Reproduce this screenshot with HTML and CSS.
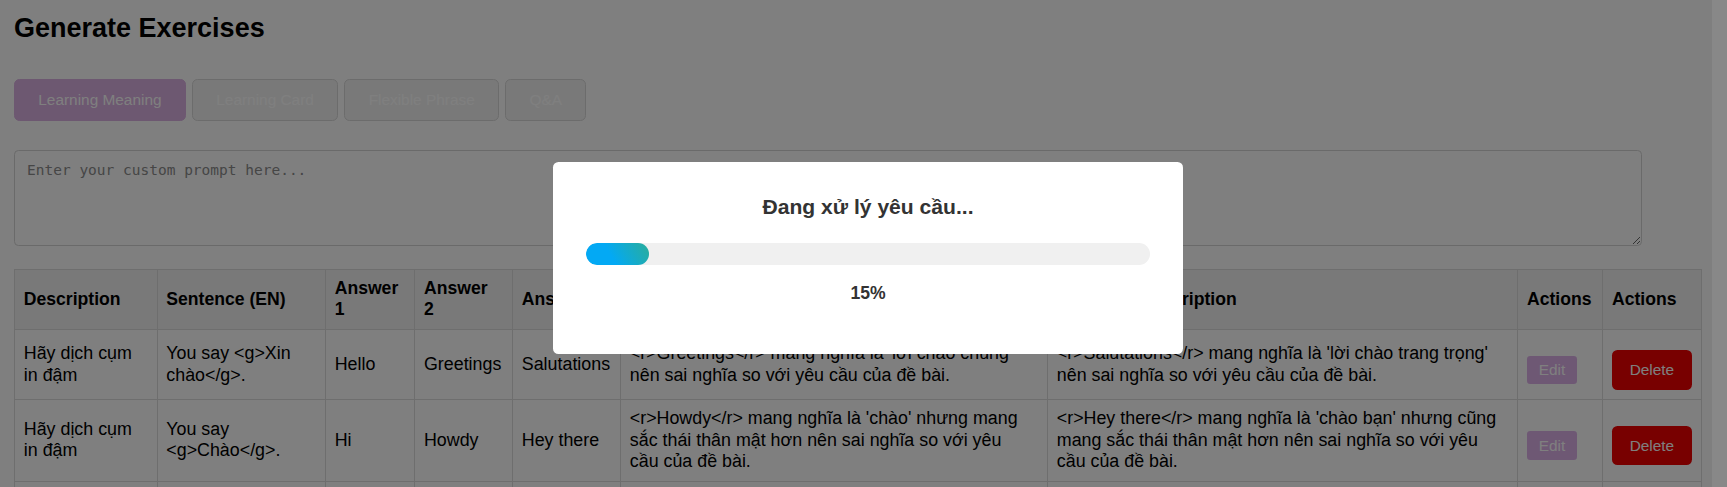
FILE: index.html
```html
<!DOCTYPE html>
<html lang="vi">
<head>
<meta charset="utf-8">
<title>Generate Exercises</title>
<link rel="stylesheet" href="styles.css">
</head>
<body>
<div class="page">
  <h2 class="title">Generate Exercises</h2>
  <div class="tabs">
    <button class="tab tab-active">Learning Meaning</button>
    <button class="tab">Learning Card</button>
    <button class="tab">Flexible Phrase</button>
    <button class="tab">Q&amp;A</button>
  </div>
  <textarea class="prompt" placeholder="Enter your custom prompt here..."></textarea>
  <table class="grid">
    <thead>
      <tr>
        <th class="c1">Description</th>
        <th class="c2">Sentence (EN)</th>
        <th class="c3">Answer 1</th>
        <th class="c4">Answer 2</th>
        <th class="c5">Answer 3</th>
        <th class="c6">Answer 2 Description</th>
        <th class="c7">Answer 3 Description</th>
        <th class="c8">Actions</th>
        <th class="c9">Actions</th>
      </tr>
    </thead>
    <tbody>
      <tr>
        <td>Hãy dịch cụm in đậm</td>
        <td>You say &lt;g&gt;Xin chào&lt;/g&gt;.</td>
        <td>Hello</td>
        <td>Greetings</td>
        <td>Salutations</td>
        <td class="desc">&lt;r&gt;Greetings&lt;/r&gt; mang nghĩa là 'lời chào chung' nên sai nghĩa so với yêu cầu của đề bài.</td>
        <td>&lt;r&gt;Salutations&lt;/r&gt; mang nghĩa là 'lời chào trang trọng' nên sai nghĩa so với yêu cầu của đề bài.</td>
        <td><button class="btn-edit">Edit</button></td>
        <td><button class="btn-delete">Delete</button></td>
      </tr>
      <tr>
        <td>Hãy dịch cụm in đậm</td>
        <td>You say &lt;g&gt;Chào&lt;/g&gt;.</td>
        <td>Hi</td>
        <td>Howdy</td>
        <td>Hey there</td>
        <td class="desc">&lt;r&gt;Howdy&lt;/r&gt; mang nghĩa là 'chào' nhưng mang sắc thái thân mật hơn nên sai nghĩa so với yêu cầu của đề bài.</td>
        <td>&lt;r&gt;Hey there&lt;/r&gt; mang nghĩa là 'chào bạn' nhưng cũng mang sắc thái thân mật hơn nên sai nghĩa so với yêu cầu của đề bài.</td>
        <td><button class="btn-edit">Edit</button></td>
        <td><button class="btn-delete">Delete</button></td>
      </tr>
      <tr class="row-next">
        <td></td>
        <td></td>
        <td></td>
        <td></td>
        <td></td>
        <td></td>
        <td></td>
        <td></td>
        <td></td>
      </tr>
    </tbody>
  </table>
</div>
<div class="scrollbar"></div>
<div class="overlay">
  <div class="modal">
    <h3 class="modal-title">Đang xử lý yêu cầu...</h3>
    <div class="progress"><div class="progress-fill" style="width: 63px"></div></div>
    <div class="progress-label">15%</div>
  </div>
</div>
</body>
</html>
```
FILE: styles.css
```css
html, body {
  margin: 0;
  padding: 0;
  overflow: hidden;
  background: #ffffff;
}

body {
  font-family: "Liberation Sans", Arial, sans-serif;
  color: #000000;
}

.page {
  padding-left: 14px;
}

.title {
  margin: 12.7px 0 0;
  font-size: 27px;
  line-height: 31px;
  font-weight: bold;
}

.tabs {
  display: flex;
  gap: 6.2px;
  margin-top: 35.6px;
}

.tab {
  font-family: "Liberation Sans", Arial, sans-serif;
  font-size: 15.4px;
  line-height: 17.7px;
  padding: 11px 23.3px;
  border: 1px solid #d9d9d9;
  border-radius: 5.5px;
  background: #f3f3f3;
  color: #ffffff;
}

.tab-active {
  background: #dab0e2;
  border-color: #dab0e2;
}

.prompt {
  display: block;
  box-sizing: border-box;
  width: 1628px;
  height: 96px;
  margin: 28.6px 0 0;
  padding: 11px 12px;
  border: 1px solid #d4d4d4;
  border-radius: 4.4px;
  font-family: "DejaVu Sans Mono", monospace;
  font-size: 14.5px;
  background: #ffffff;
}

.prompt::placeholder {
  color: #8c8c8c;
}

.grid {
  border-collapse: collapse;
  table-layout: fixed;
  width: 1687px;
  margin-top: 23px;
  font-size: 17.85px;
  line-height: 21.1px;
}

.grid th,
.grid td {
  box-sizing: border-box;
  border: 1px solid #dddddd;
  padding: 8.8px;
  text-align: left;
  vertical-align: middle;
}

.grid th {
  background: #f2f2f2;
  font-weight: bold;
  font-size: 17.6px;
}

.grid td.desc {
  padding-right: 15px;
}

.row-next td {
  height: 60px;
}

.c1 { width: 142.5px; }
.c2 { width: 168.4px; }
.c3 { width: 89.3px; }
.c4 { width: 97.8px; }
.grid th.c4 { padding-right: 20px; }
.c5 { width: 108px; }
.c6 { width: 427px; }
.c7 { width: 470.2px; }
.c8 { width: 85px; }
.c9 { width: 98.8px; }

.btn-edit,
.btn-delete {
  margin-top: 11px;
  border: 0;
  color: #ffffff;
  font-family: "Liberation Sans", Arial, sans-serif;
  font-size: 15.4px;
  line-height: 17.7px;
}

.btn-edit {
  padding: 5.5px 11.7px;
  border-radius: 3.3px;
  background: #dcb0e8;
}

.btn-delete {
  padding: 11px 17.7px;
  border-radius: 5.5px;
  background: #f00000;
}

.scrollbar {
  position: fixed;
  top: 0;
  right: 0;
  width: 15px;
  height: 100%;
  background: #888888;
  z-index: 2;
}

.overlay {
  position: fixed;
  inset: 0;
  background: rgba(0, 0, 0, 0.5);
  z-index: 1;
}

.modal {
  position: absolute;
  left: 553px;
  top: 162px;
  width: 630px;
  height: 192px;
  box-sizing: border-box;
  padding: 33px;
  background: #ffffff;
  border-radius: 5.5px;
  text-align: center;
}

.modal-title {
  margin: 0 0 23.7px;
  font-size: 21.1px;
  line-height: 24.3px;
  font-weight: bold;
  color: #333333;
}

.progress {
  height: 22px;
  background: #f0f0f0;
  border-radius: 11px;
  overflow: hidden;
}

.progress-fill {
  height: 100%;
  border-radius: 11px;
  background: linear-gradient(60deg, #03a9f4 40%, #2aad9a 100%);
}

.progress-label {
  margin-top: 18.4px;
  font-size: 17.6px;
  line-height: 20.2px;
  font-weight: bold;
  color: #333333;
}
```
